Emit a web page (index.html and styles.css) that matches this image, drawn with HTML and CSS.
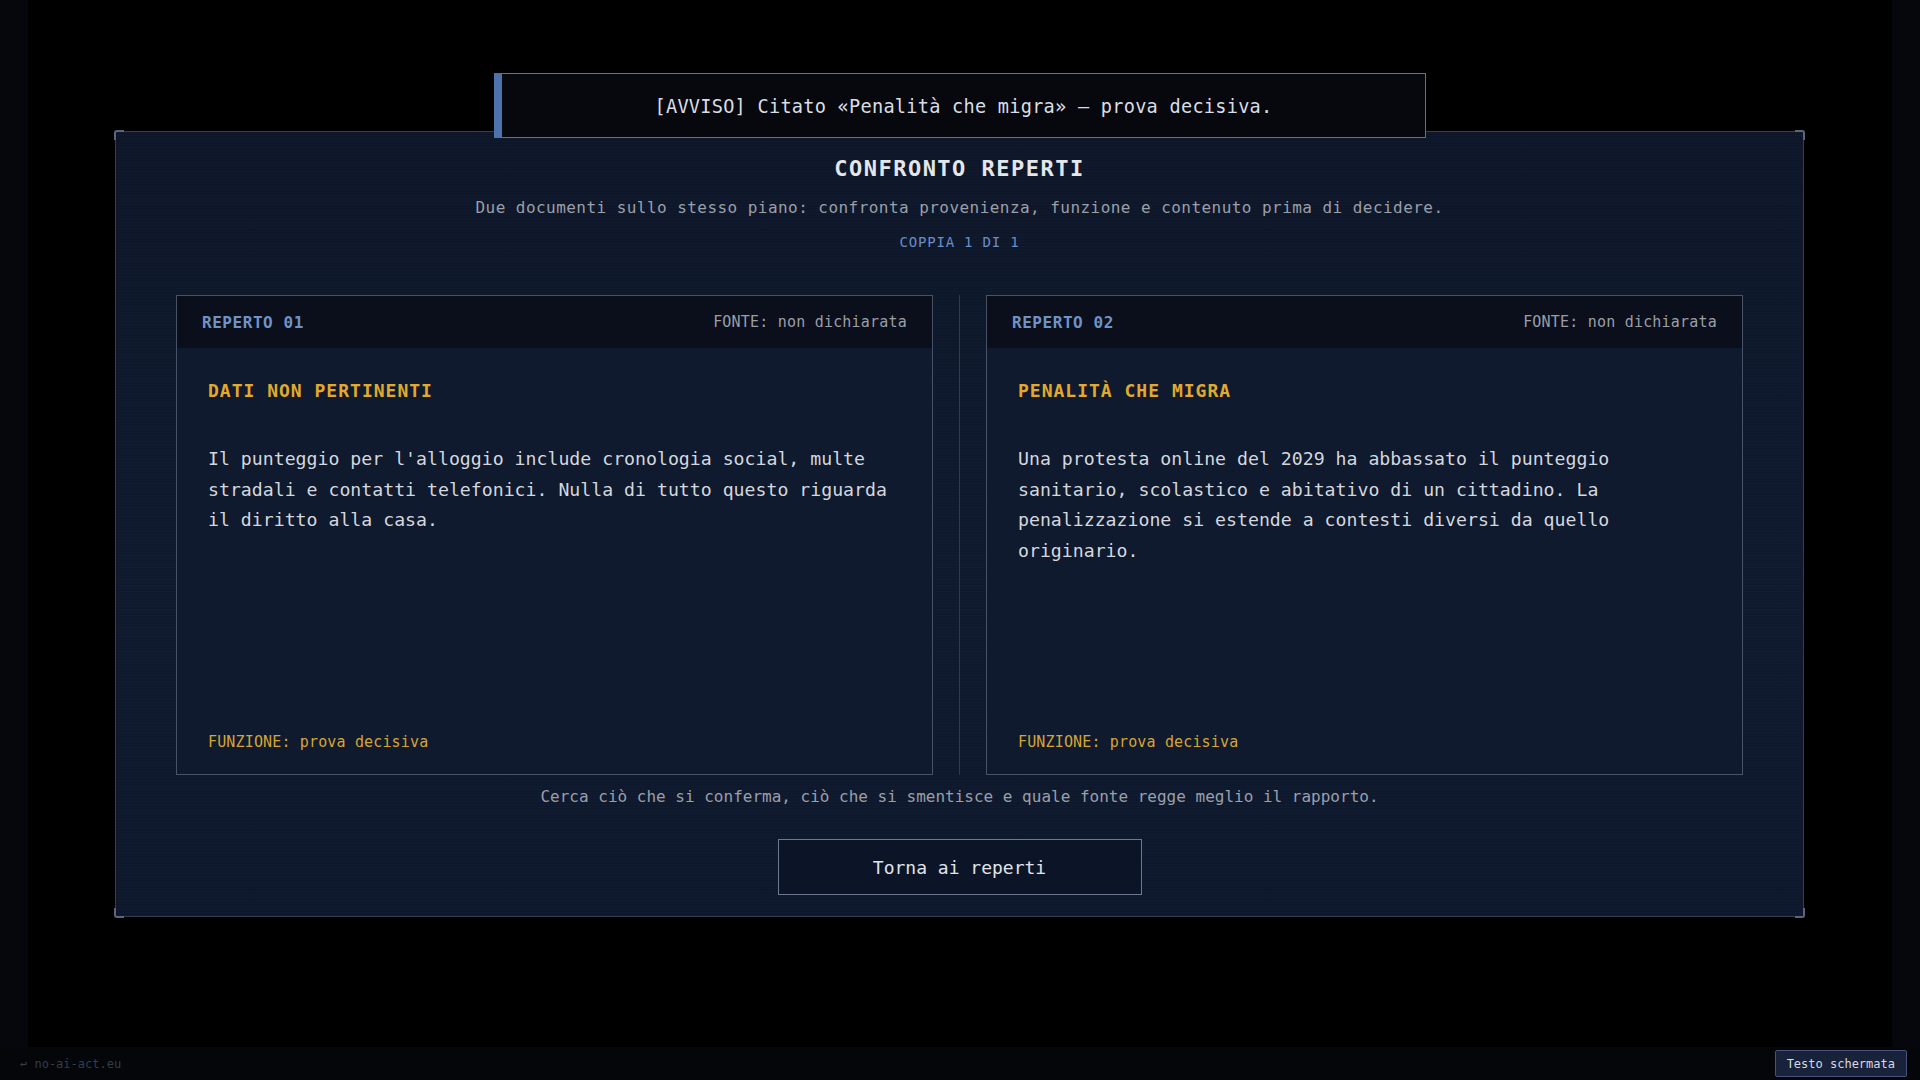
FILE: index.html
```html
<!DOCTYPE html>
<html lang="it">
<head>
<meta charset="utf-8">
<title>Confronto reperti</title>
<link rel="stylesheet" href="styles.css">
</head>
<body>
<div class="app">
  <div class="stage">
    <div class="rail"></div>
    <main class="center">
      <div class="toast"><span class="toast-text">[AVVISO] Citato «Penalità che migra» — prova decisiva.</span></div>
      <section class="panel">
        <span class="corner tl"></span><span class="corner tr"></span><span class="corner bl"></span><span class="corner br"></span>
        <h1 class="title">CONFRONTO REPERTI</h1>
        <p class="subtitle">Due documenti sullo stesso piano: confronta provenienza, funzione e contenuto prima di decidere.</p>
        <p class="pair">COPPIA 1 DI 1</p>
        <div class="cards">
          <article class="card">
            <header class="card-head"><span class="card-id">REPERTO 01</span><span class="card-src">FONTE: non dichiarata</span></header>
            <div class="card-body">
              <h2 class="card-title">DATI NON PERTINENTI</h2>
              <p class="card-text">Il punteggio per l'alloggio include cronologia social, multe stradali e contatti telefonici. Nulla di tutto questo riguarda il diritto alla casa.</p>
              <p class="card-fn">FUNZIONE: prova decisiva</p>
            </div>
          </article>
          <div class="divider"></div>
          <article class="card">
            <header class="card-head"><span class="card-id">REPERTO 02</span><span class="card-src">FONTE: non dichiarata</span></header>
            <div class="card-body">
              <h2 class="card-title">PENALITÀ CHE MIGRA</h2>
              <p class="card-text">Una protesta online del 2029 ha abbassato il punteggio sanitario, scolastico e abitativo di un cittadino. La penalizzazione si estende a contesti diversi da quello originario.</p>
              <p class="card-fn">FUNZIONE: prova decisiva</p>
            </div>
          </article>
        </div>
        <p class="hint">Cerca ciò che si conferma, ciò che si smentisce e quale fonte regge meglio il rapporto.</p>
        <div class="actions"><button class="back-btn" type="button">Torna ai reperti</button></div>
      </section>
    </main>
    <div class="rail"></div>
  </div>
  <footer class="footer">
    <span class="credit">↩ no-ai-act.eu</span>
    <button class="screen-btn" type="button">Testo schermata</button>
  </footer>
</div>
</body>
</html>
```
FILE: styles.css
```css
* { box-sizing: border-box; }
html, body { margin: 0; padding: 0; background: #000; }
body {
  width: 1920px;
  height: 1080px;
  overflow: hidden;
  font-family: "DejaVu Sans Mono", "Liberation Mono", monospace;
  color: #d3d6dc;
}
.app { display: flex; flex-direction: column; height: 1080px; }
.stage { flex: 1; display: flex; min-height: 0; }
.rail { width: 28px; background: #05070c; }
.center {
  flex: 1;
  position: relative;
  background: #000;
  padding: 131px 88px 0 87px;
}
.toast {
  position: absolute;
  top: 73px;
  left: 50%;
  transform: translateX(-50%);
  width: 932px;
  height: 65px;
  background: #07080d;
  border: 1px solid #56739f;
  border-left: 8px solid #4e72ac;
  display: flex;
  align-items: center;
  justify-content: center;
  padding-top: 2px;
  z-index: 2;
}
.toast-text { font-size: 18.6px; letter-spacing: 0.25px; color: #dadde4; }

.panel {
  position: relative;
  height: 786px;
  border: 1px solid #343d52;
  background:
    repeating-linear-gradient(0deg, rgba(255,255,255,0.012) 0 1px, transparent 1px 3px),
    linear-gradient(180deg, #0e1729 0%, #0f1a2f 60%, #0e182c 100%);
  padding: 23px 60px 0 60px;
  display: flex;
  flex-direction: column;
  align-items: stretch;
}
.corner { position: absolute; width: 10px; height: 10px; border-color: #5d6679; border-style: solid; border-width: 0; }
.corner.tl { top: -2px; left: -2px; border-top-width: 2px; border-left-width: 2px; border-top-left-radius: 3px; }
.corner.tr { top: -2px; right: -2px; border-top-width: 2px; border-right-width: 2px; border-top-right-radius: 3px; }
.corner.bl { bottom: -2px; left: -2px; border-bottom-width: 2px; border-left-width: 2px; border-bottom-left-radius: 3px; }
.corner.br { bottom: -2px; right: -2px; border-bottom-width: 2px; border-right-width: 2px; border-bottom-right-radius: 3px; }

.title {
  margin: 0;
  text-align: center;
  font-size: 22px;
  line-height: 28px;
  font-weight: bold;
  letter-spacing: 1.5px;
  color: #e4e6ea;
}
.subtitle {
  margin: 13px 0 0;
  text-align: center;
  font-size: 16px;
  letter-spacing: 0.45px;
  line-height: 24px;
  color: #9a9fa9;
}
.pair {
  margin: 12px 0 0;
  text-align: center;
  font-size: 14px;
  letter-spacing: 0.8px;
  line-height: 20px;
  color: #6a8ec6;
}
.cards {
  margin-top: 43px;
  height: 480px;
  display: grid;
  grid-template-columns: 1fr 1px 1fr;
  column-gap: 26px;
}
.divider { background: #313a4e; }
.card {
  border: 1px solid #485267;
  background: #0f1a2e;
  display: flex;
  flex-direction: column;
}
.card-head {
  height: 52px;
  background: #0a0f1b;
  display: flex;
  align-items: center;
  justify-content: space-between;
  padding: 0 25px;
}
.card-id { font-size: 16px; font-weight: bold; letter-spacing: 0.55px; color: #6f93c9; }
.card-src { font-size: 15px; letter-spacing: 0.2px; color: #9a9ea7; }
.card-body {
  flex: 1;
  display: flex;
  flex-direction: column;
  padding: 30px 30px 22px 31px;
}
.card-title {
  margin: 0;
  font-size: 18px;
  line-height: 26px;
  font-weight: bold;
  letter-spacing: 1px;
  color: #e2aa2c;
}
.card-text {
  margin: 40px 0 0;
  font-size: 18.2px;
  line-height: 30.6px;
  color: #d4d7dd;
}
.card-fn {
  margin: auto 0 0;
  font-size: 15px;
  letter-spacing: 0.15px;
  line-height: 20px;
  color: #d6a531;
}
.hint {
  margin: 10px 0 0;
  text-align: center;
  font-size: 16px;
  line-height: 24px;
  color: #9a9fa9;
}
.actions { display: flex; justify-content: center; margin-top: 30px; }
.back-btn {
  width: 364px;
  height: 56px;
  background: #0c1528;
  border: 1px solid #6e7890;
  color: #e0e3e8;
  font-family: "DejaVu Sans Mono", "Liberation Mono", monospace;
  font-size: 18px;
  cursor: pointer;
}

.footer {
  height: 33px;
  background: #04060a;
  display: flex;
  align-items: center;
  justify-content: space-between;
  padding: 0 13px 0 20px;
}
.credit { font-size: 12px; color: #353c4a; }
.screen-btn {
  height: 27px;
  padding: 0 11px;
  background: #18223a;
  border: 1px solid #45537a;
  border-radius: 2px;
  color: #d6d9e0;
  font-family: "DejaVu Sans Mono", "Liberation Mono", monospace;
  font-size: 12px;
}
```
